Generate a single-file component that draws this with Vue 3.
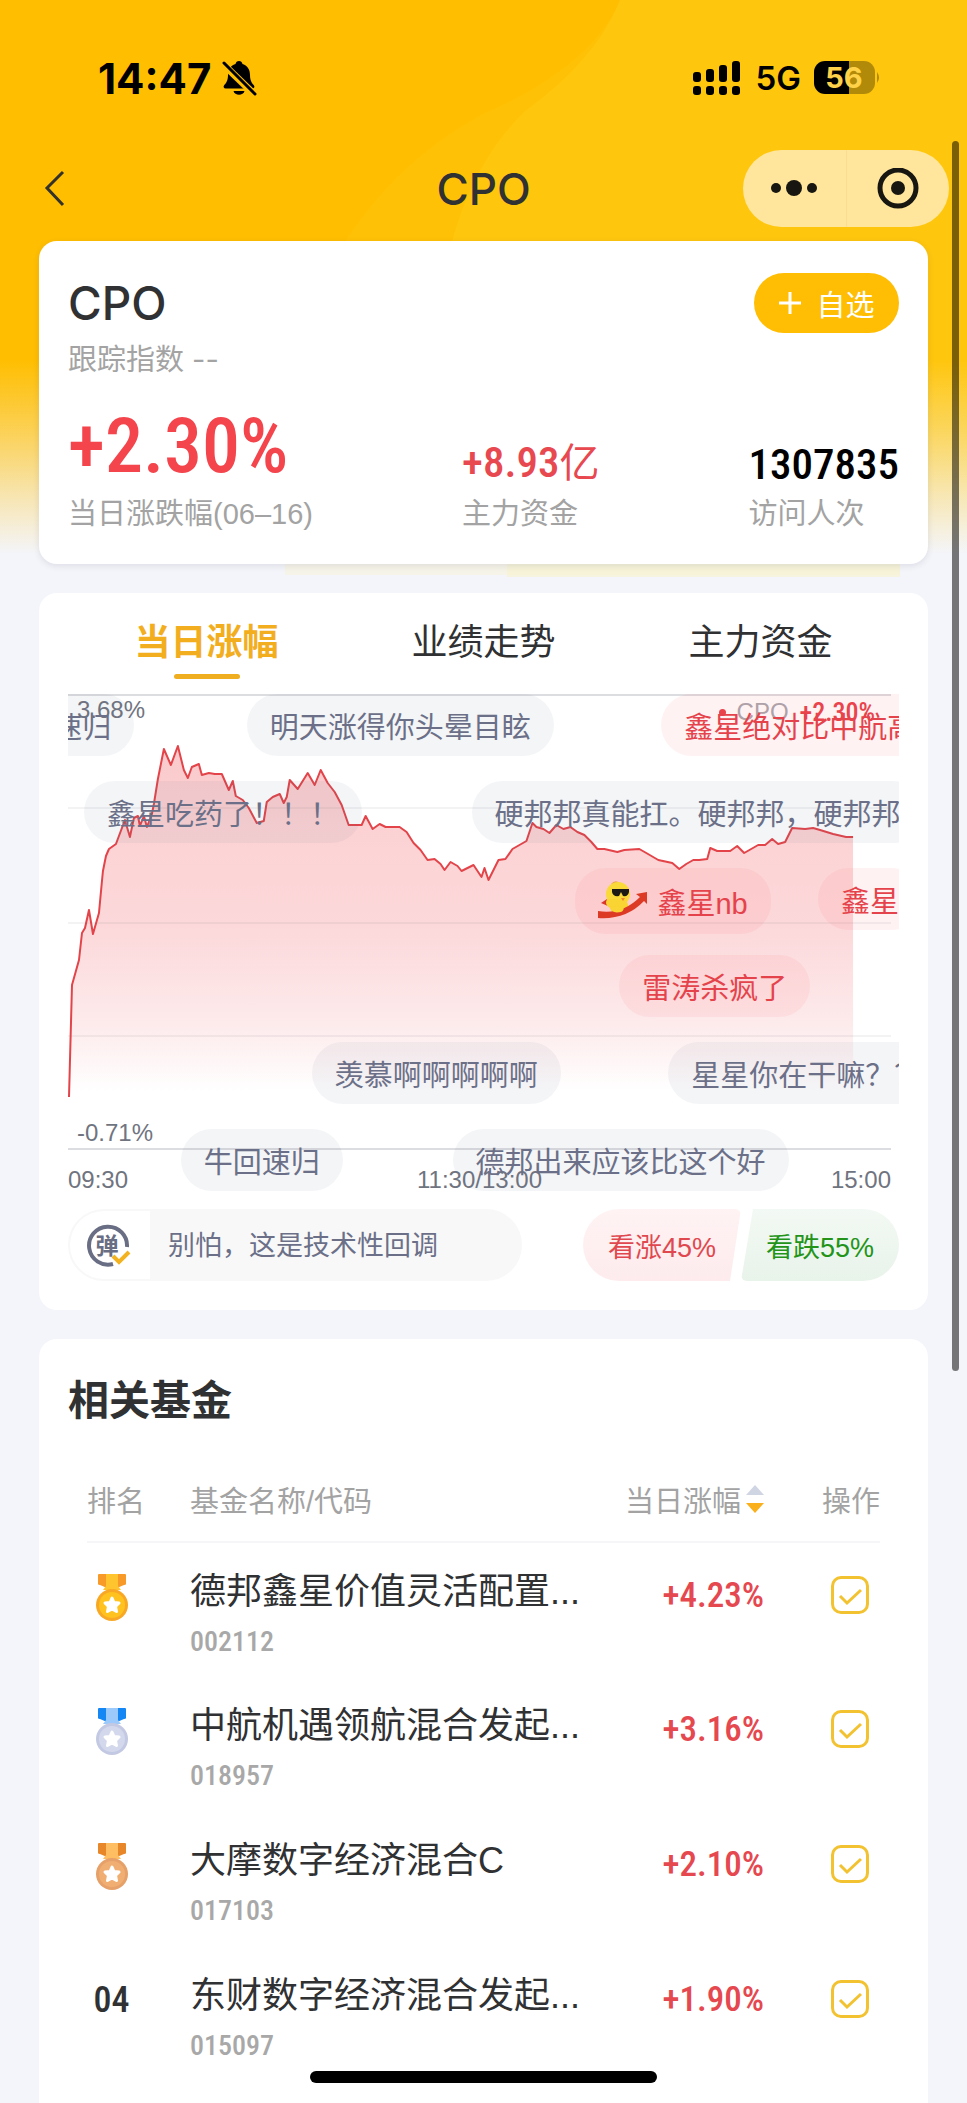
<script setup>
import { ref } from 'vue'

const tabs = ['当日涨幅', '业绩走势', '主力资金']
const activeTab = ref(0)

// The plot is drawn in the coordinates of its viewBox: x 67-899, y 693-1193
const plot = { left: 67, width: 832 }
const trend = [
  [68, 1096], [71, 984], [78, 959], [81, 932], [84, 927], [88, 909], [92, 933], [98, 912], [101, 880],
  [102, 870], [105, 855], [108, 848], [115, 843], [124, 819], [129, 836], [133, 817], [137, 815],
  [139, 825], [143, 815], [146, 826], [151, 813], [153, 803], [157, 778], [163, 748], [170, 764],
  [177, 745], [183, 769], [187, 777], [191, 766], [198, 763], [201, 774], [208, 772], [214, 773],
  [221, 773], [228, 789], [232, 780], [235, 795], [242, 799], [248, 807], [256, 822], [263, 820],
  [266, 801], [272, 796], [279, 793], [283, 802], [286, 796], [289, 779], [297, 788], [307, 772],
  [314, 784], [320, 769], [327, 782], [334, 791], [341, 804], [348, 824], [361, 824], [365, 815],
  [372, 828], [379, 823], [385, 826], [399, 826], [406, 831], [413, 842], [420, 849], [427, 859],
  [434, 858], [440, 863], [444, 869], [450, 861], [457, 865], [461, 870], [473, 864], [481, 876],
  [484, 867], [488, 879], [498, 859], [505, 858], [512, 848], [526, 840], [532, 822], [536, 826],
  [543, 828], [549, 832], [556, 824], [563, 828], [570, 826], [577, 831], [584, 834], [591, 841],
  [597, 848], [604, 848], [617, 851], [624, 849], [639, 848], [646, 852], [658, 859], [672, 862],
  [679, 868], [686, 863], [693, 859], [699, 859], [707, 858], [710, 847], [717, 850], [730, 850],
  [737, 845], [744, 852], [758, 844], [765, 844], [772, 838], [778, 843], [785, 841], [792, 827],
  [805, 828], [813, 827], [820, 829], [833, 833], [846, 836], [853, 836]
]
const line = trend.map((p) => p.join(',')).join(' ')
const area = `68,1096 ${line} 853,1096`
const gridLines = [807, 922, 1035]

const bullets = [
  { row: 0, x: -29, text: '牛回速归' },
  { row: 0, x: 246, text: '明天涨得你头晕目眩' },
  { row: 0, x: 661, text: '鑫星绝对比中航高', up: true },
  { row: 1, x: 83, text: '鑫星吃药了！！！' },
  { row: 1, x: 471, text: '硬邦邦真能扛。硬邦邦，硬邦邦' },
  { row: 2, x: 575, text: '鑫星nb', up: true, chick: true },
  { row: 2, x: 818, text: '鑫星', up: true },
  { row: 3, x: 619, text: '雷涛杀疯了', up: true },
  { row: 4, x: 311, text: '羡慕啊啊啊啊啊' },
  { row: 4, x: 668, text: '星星你在干嘛？？' },
  { row: 5, x: 180, text: '牛回速归' },
  { row: 5, x: 452, text: '德邦出来应该比这个好' }
]
const place = (b) => ({
  left: ((b.x - plot.left) / plot.width) * 100 + '%',
  top: b.row * 87 + 'px'
})

const medals = [
  { side: '#f79a28', mid: '#ffc42e', rim: '#f9a825', disc: '#ffc21f' },
  { side: '#1487f5', mid: '#9cc9fb', rim: '#c3c9e2', disc: '#d3d8ec' },
  { side: '#e8872a', mid: '#ffbe62', rim: '#e6a069', disc: '#f0ae72' }
]
const funds = ref([
  { name: '德邦鑫星价值灵活配置...', code: '002112', change: '+4.23%', picked: true },
  { name: '中航机遇领航混合发起...', code: '018957', change: '+3.16%', picked: true },
  { name: '大摩数字经济混合C', code: '017103', change: '+2.10%', picked: true },
  { name: '东财数字经济混合发起...', code: '015097', change: '+1.90%', picked: true }
])
</script>

<template>
  <div class="page">
    <svg class="backdrop" viewBox="0 0 967 580" preserveAspectRatio="none" aria-hidden="true">
      <defs>
        <linearGradient id="fade" x1="0" y1="0" x2="0" y2="1">
          <stop offset="0.62" stop-color="#f4f5fa" stop-opacity="0" />
          <stop offset="0.74" stop-color="#f4f5fa" stop-opacity="0.33" />
          <stop offset="0.86" stop-color="#f4f5fa" stop-opacity="0.72" />
          <stop offset="0.955" stop-color="#f4f5fa" stop-opacity="1" />
        </linearGradient>
      </defs>
      <rect width="967" height="580" fill="#ffbe00" />
      <path d="M620 0C600 50 540 90 487 112C430 142 380 185 340 250L300 580H967V0Z" fill="#ffc106" />
      <path d="M620 0C600 50 560 85 524 112C485 150 462 200 450 250L420 580H967V0Z" fill="#ffc60e" />
      <rect width="967" height="580" fill="url(#fade)" />
      <path d="M285 563H900V575H285Z" fill="#f6f4dc" opacity="0.6" />
      <path d="M507 563H900V577H507Z" fill="#f6f2d2" opacity="0.7" />
    </svg>

    <header class="top">
      <div class="status">
        <span class="clock">14:47</span>
        <svg class="bell" width="36" height="36" viewBox="0 0 36 36" aria-hidden="true">
          <path d="M18 1c2 0 3 1 3.500 3C27 6 29 10 29 15c0 6 2 8 4 10.500c1 1.500 0 3-1.500 3H4.500C3 28.500 2 27 3 25.500C5 23 7 21 7 15C7 10 9 6 14.500 4C15 2 16 1 18 1Z" />
          <path d="M12.500 31h11c-1 5-10 5-11 0Z" />
          <path d="M2 4L33 34" stroke="#ffbe00" stroke-width="7" />
          <path d="M3 3L34 34" stroke="#000" stroke-width="3" stroke-linecap="round" />
        </svg>
        <span class="spacer"></span>
        <svg class="signal" width="48" height="34" viewBox="0 0 48 34" aria-hidden="true">
          <rect x="0" y="11" width="8" height="10" rx="3" /><rect x="13" y="8" width="8" height="13" rx="3" />
          <rect x="26" y="4" width="8" height="17" rx="3" /><rect x="39" y="0" width="8" height="21" rx="3" />
          <rect x="0" y="25" width="8" height="9" rx="3" /><rect x="13" y="25" width="8" height="9" rx="3" />
          <rect x="26" y="25" width="8" height="9" rx="3" /><rect x="39" y="25" width="8" height="9" rx="3" />
        </svg>
        <span class="network">5G</span>
        <svg class="battery" width="67" height="34" viewBox="0 0 67 34" aria-hidden="true">
          <path d="M35 0H50a11 11 0 0 1 11 11V22a11 11 0 0 1-11 11H35Z" fill="#000" opacity="0.3" />
          <path d="M35 0H11A11 11 0 0 0 0 11V22A11 11 0 0 0 11 33H35Z" fill="#000" />
          <path d="M63 11q4 5.500 0 11Z" fill="#000" opacity="0.3" />
          <text x="30" y="27" text-anchor="middle" class="charge">56</text>
        </svg>
      </div>

      <nav class="nav">
        <button class="back" type="button" aria-label="返回">
          <svg width="22" height="38" viewBox="0 0 22 38"><path d="M19 2L3 18L19 35" fill="none" stroke="#33322a" stroke-width="3" /></svg>
        </button>
        <h1>CPO</h1>
        <div class="capsule">
          <button type="button" aria-label="更多">
            <svg width="46" height="20" viewBox="0 0 46 20"><circle cx="5" cy="9" r="5" /><circle cx="23" cy="9" r="8" /><circle cx="41" cy="9" r="5" /></svg>
          </button>
          <button type="button" aria-label="关闭">
            <svg width="42" height="42" viewBox="0 0 42 42"><circle cx="21" cy="20" r="18" fill="none" stroke="#171610" stroke-width="5" /><circle cx="21" cy="20" r="7" /></svg>
          </button>
        </div>
      </nav>
    </header>

    <main>
      <section class="card summary">
        <div class="title-row">
          <h2>CPO</h2>
          <button class="add" type="button">
            <svg width="24" height="24" viewBox="0 0 24 24" aria-hidden="true"><path d="M12 1V23M1 12H23" stroke="#fff" stroke-width="3" /></svg>
            自选
          </button>
        </div>
        <p class="label tracking">跟踪指数 <span>--</span></p>
        <div class="stats">
          <div><strong class="big">+2.30%</strong><span class="label">当日涨跌幅(06–16)</span></div>
          <div><strong class="mid up">+8.93<b>亿</b></strong><span class="label">主力资金</span></div>
          <div><strong class="mid">1307835</strong><span class="label">访问人次</span></div>
        </div>
      </section>

      <section class="card trend">
        <div class="tabs" role="tablist">
          <button
            v-for="(tab, i) in tabs" :key="tab" type="button" role="tab"
            :aria-selected="activeTab === i" :class="{ active: activeTab === i }" @click="activeTab = i"
          >{{ tab }}</button>
        </div>

        <div class="chart">
          <svg class="plot" viewBox="67 693 832 500" preserveAspectRatio="none" aria-hidden="true">
            <defs>
              <linearGradient id="rise" gradientUnits="userSpaceOnUse" x1="0" y1="745" x2="0" y2="1090">
                <stop offset="0" stop-color="#fac9cb" />
                <stop offset="0.3" stop-color="#fcd4d5" />
                <stop offset="0.52" stop-color="#fcd8da" />
                <stop offset="0.8" stop-color="#fdeaeb" />
                <stop offset="1" stop-color="#fff" />
              </linearGradient>
            </defs>
            <polygon :points="area" fill="url(#rise)" />
            <path v-for="y in gridLines" :key="y" :d="`M67 ${y}H891`" stroke="#64646e" stroke-opacity="0.08" stroke-width="2" />
            <path d="M67 694H891M67 1148H891" stroke="#dcdde0" stroke-width="2" />
            <polyline :points="line" fill="none" stroke="#e2444a" stroke-width="2" stroke-linejoin="round" />
          </svg>
          <span class="tick high">3.68%</span>
          <span class="tick low">-0.71%</span>
          <div class="legend"><i></i><span>CPO</span><b>+2.30%</b></div>
          <div class="times"><span>09:30</span><span>11:30/13:00</span><span>15:00</span></div>
          <div
            v-for="(b, i) in bullets" :key="i" class="bullet"
            :class="{ up: b.up, chick: b.chick }" :style="place(b)"
          >
            <svg v-if="b.chick" width="50" height="42" viewBox="0 0 50 42" aria-hidden="true">
              <path d="M9 19L3 23L10 26Z" fill="#d9362c" />
              <path d="M13 4Q17-1 22 3L18 7Z" fill="#eaa54c" />
              <circle cx="20" cy="14" r="12" fill="#f9da38" />
              <path d="M9 19Q6 25 12 28Q14 36 25 34Q34 30 28 20Z" fill="#f9d432" />
              <path d="M0 31Q24 35 42 17L38 14L49 12L49 24L46 21Q28 40 0 38Z" fill="#dd3a26" />
              <path d="M12 27Q13 34 23 32Q27 30 25 26Z" fill="#f9d432" />
              <path d="M14 9H31V12Q30 17 25 16L23 12L21 16Q15 17 14 12Z" fill="#1c1a14" />
              <path d="M23 18L27 18L25 21Z" fill="#f08a2a" />
            </svg>
            <span>{{ b.text }}</span>
          </div>
        </div>

        <div class="actions">
          <div class="comment">
            <button type="button" aria-label="弹幕开关">
              <svg width="46" height="46" viewBox="0 0 46 46" aria-hidden="true">
                <path d="M42 25A19 19 0 1 0 28 42" fill="none" stroke="#696e84" stroke-width="4" />
                <text x="22" y="32" text-anchor="middle" class="dan">弹</text>
                <path d="M28 34L34 40L44 30" fill="none" stroke="#f3b220" stroke-width="4" />
              </svg>
            </button>
            <input type="text" aria-label="发送弹幕" placeholder="别怕，这是技术性回调" />
          </div>
          <div class="votes">
            <button class="bull" type="button">看涨45%</button>
            <button class="bear" type="button">看跌55%</button>
          </div>
        </div>
      </section>

      <section class="card funds">
        <h2>相关基金</h2>
        <table>
          <thead>
            <tr>
              <th class="rank">排名</th>
              <th class="name">基金名称/代码</th>
              <th class="change">
                <button type="button">当日涨幅<svg width="18" height="30" viewBox="0 0 18 30" aria-hidden="true"><path d="M9 1L18 11H0Z" fill="#d0d5e4" /><path d="M9 29L0 19H18Z" fill="#f9b01c" /></svg></button>
              </th>
              <th class="pick">操作</th>
            </tr>
          </thead>
          <tbody>
            <tr v-for="(fund, i) in funds" :key="fund.code">
              <td class="rank">
                <svg v-if="medals[i]" width="34" height="50" viewBox="0 0 34 50" role="img" :aria-label="`第${i + 1}名`">
                  <path d="M3 2Q3 1 4 1H30Q31 1 31 2V11Q31 12 29 12L22 15H12L5 12Q3 12 3 11Z" :fill="medals[i].side" />
                  <path d="M11 1H23V13L26 17H8L11 13Z" :fill="medals[i].mid" />
                  <circle cx="17" cy="32" r="16" :fill="medals[i].rim" />
                  <circle cx="17" cy="32" r="13" :fill="medals[i].disc" />
                  <path d="M17 25L19 29.500L24 30L20.500 33.500L21.500 38.500L17 36L12.500 38.500L13.500 33.500L10 30L15 29.500Z" fill="#fff" stroke="#fff" stroke-width="3" stroke-linejoin="round" />
                </svg>
                <span v-else>{{ String(i + 1).padStart(2, '0') }}</span>
              </td>
              <td class="name"><a href="#">{{ fund.name }}</a><small>{{ fund.code }}</small></td>
              <td class="change">{{ fund.change }}</td>
              <td class="pick">
                <label>
                  <input v-model="fund.picked" type="checkbox" :aria-label="fund.name" />
                  <svg v-if="fund.picked" width="38" height="38" viewBox="0 0 38 38" aria-hidden="true"><path d="M9 20L16 27L30 14" fill="none" stroke="#f2c230" stroke-width="3" /></svg>
                </label>
              </td>
            </tr>
          </tbody>
        </table>
      </section>
    </main>

    <div class="scrollbar"></div>
    <div class="home"></div>
  </div>
</template>

<style>
body {
  background: #f4f5fa;
}
</style>

<style scoped>
.page {
  --sans: "Liberation Sans", "Noto Sans CJK SC", sans-serif;
  --narrow: "Liberation Sans Narrow", "Arial Narrow", "Roboto Condensed", "Roboto", "Noto Sans CJK SC", sans-serif;
  position: relative;
  display: flex;
  flex-direction: column;
  min-height: 100vh;
  overflow: hidden;
  background: #f4f5fa;
  font-family: var(--sans);
  font-size: 29px;
  color: #303133;
}
.page * {
  box-sizing: border-box;
}
h1, h2, p {
  margin: 0;
}
button {
  padding: 0;
  border: 0;
  background: none;
  color: inherit;
  font: inherit;
  cursor: pointer;
}
svg {
  display: block;
  flex: none;
}
.backdrop {
  position: absolute;
  top: 0;
  left: 0;
  width: 100%;
  height: 580px;
}
.top, main {
  position: relative;
}
.status {
  display: flex;
  align-items: center;
  height: 150px;
  padding: 58px 86px 52px 98px;
  color: #000;
  font-family: "Inter", sans-serif;
}
.clock {
  font-size: 42px;
  font-weight: 700;
}
.bell {
  margin-left: 10px;
}
.spacer {
  flex: 1;
}
.network {
  margin: 0 13px 0 15px;
  font-size: 33px;
  font-weight: 600;
}
.charge {
  fill: #ffd24a;
  font-size: 29px;
  font-weight: 700;
}
.nav {
  display: grid;
  grid-template-columns: 1fr auto 1fr;
  align-items: center;
  height: 77px;
  padding: 0 18px;
}
.back {
  justify-self: start;
  padding: 0 26px;
}
.nav h1 {
  font-family: "Inter", sans-serif;
  font-size: 44px;
  font-weight: 500;
}
.capsule {
  justify-self: end;
  display: flex;
  width: 206px;
  height: 77px;
  border-radius: 39px;
  background: #ffe69c;
}
.capsule button {
  display: flex;
  flex: 1;
  align-items: center;
  justify-content: center;
  fill: #171610;
}
.capsule button + button {
  border-left: 1px solid #f9de92;
}
main {
  display: flex;
  flex: 1;
  flex-direction: column;
  gap: 29px;
  padding: 14px 39px 0;
}
.card {
  border-radius: 18px;
  background: #fff;
}
.summary {
  padding: 32px 29px 30px;
  box-shadow: 0 2px 6px rgba(60, 60, 90, 0.12);
}
.title-row {
  display: flex;
  align-items: center;
  justify-content: space-between;
  height: 60px;
}
.title-row h2 {
  font-family: "Inter", sans-serif;
  font-size: 46px;
  font-weight: 500;
}
.add {
  display: flex;
  align-items: center;
  justify-content: center;
  gap: 14px;
  width: 145px;
  height: 60px;
  border-radius: 30px;
  background: #ffbd04;
  color: #fff;
}
.label {
  color: #a3a3a3;
  line-height: 40px;
}
.tracking {
  margin-top: 7px;
}
.tracking span {
  font-family: "Inter", sans-serif;
}
.stats {
  display: flex;
  align-items: flex-end;
  justify-content: space-between;
  margin-top: 28px;
}
.stats div {
  display: flex;
  flex-direction: column;
}
.stats strong {
  font-family: var(--narrow);
  font-weight: 500;
}
.big {
  margin-bottom: 10px;
  color: #f4444c;
  font-size: 76px;
  line-height: 76px;
}
.mid {
  margin-bottom: 10px;
  color: #000;
  font-size: 43px;
  line-height: 40px;
}
.mid b {
  font-size: 40px;
  font-weight: 400;
}
.mid.up {
  color: #e8484f;
}
.trend {
  padding: 0 29px 29px;
}
.tabs {
  display: flex;
  height: 101px;
}
.tabs button {
  position: relative;
  flex: 1;
  padding: 26px 0 27px;
  font-size: 36px;
  line-height: 48px;
}
.tabs .active {
  color: #f2ae1f;
  font-weight: 700;
}
.tabs .active::after {
  content: "";
  position: absolute;
  bottom: 15px;
  left: 50%;
  width: 66px;
  height: 5px;
  margin-left: -33px;
  border-radius: 3px;
  background: #efae20;
}
.chart {
  position: relative;
  height: 501px;
  overflow: hidden;
}
.plot {
  width: 100%;
  height: 500px;
}
.tick, .times {
  color: #70747f;
  font-size: 24px;
  line-height: 30px;
}
.tick {
  position: absolute;
  left: 9px;
}
.high {
  top: 1px;
}
.low {
  top: 424px;
}
.legend {
  position: absolute;
  top: 3px;
  right: 24px;
  display: flex;
  align-items: center;
  gap: 11px;
  color: #a8a8ae;
  font-size: 24px;
  line-height: 30px;
}
.legend i {
  width: 7px;
  height: 7px;
  border-radius: 50%;
  background: #e8434c;
}
.legend b {
  color: #e8434c;
  font-family: var(--narrow);
  font-size: 26px;
  font-weight: 500;
}
.times {
  position: absolute;
  right: 8px;
  bottom: 0;
  left: 0;
  display: flex;
  justify-content: space-between;
}
.bullet {
  position: absolute;
  display: flex;
  align-items: center;
  gap: 9px;
  height: 62px;
  padding: 0 23px;
  border-radius: 31px;
  background: rgba(100, 115, 145, 0.07);
  color: #6b7088;
  white-space: nowrap;
}
.bullet.up {
  background: rgba(255, 70, 85, 0.07);
  color: #e5434b;
}
.bullet.chick {
  height: 66px;
}
.actions {
  display: flex;
  justify-content: space-between;
  margin-top: 14px;
  height: 72px;
  font-size: 27px;
}
.comment {
  display: flex;
  width: 454px;
  overflow: hidden;
  border: 2px solid #f8f8f9;
  border-radius: 36px;
  background: #f8f8f9;
}
.comment button {
  width: 80px;
  padding-left: 15px;
  background: #fff;
}
.dan {
  fill: #696e84;
  font-size: 23px;
  font-weight: 700;
}
.comment input {
  flex: 1;
  min-width: 0;
  padding: 2px 0 0 18px;
  border: 0;
  outline: 0;
  background: none;
  color: #6b7088;
  font: inherit;
}
.comment input::placeholder {
  color: #6b7088;
  opacity: 1;
}
.votes {
  display: flex;
}
.votes button {
  width: 158px;
}
.bull {
  border-radius: 36px 6px 6px 36px;
  background: linear-gradient(#fff3f4, #fdebed);
  color: #e0484f;
  clip-path: polygon(0 0, 100% 0, calc(100% - 11px) 100%, 0 100%);
}
.bear {
  border-radius: 6px 36px 36px 6px;
  background: linear-gradient(#f3f9f4, #e8f3ea);
  color: #239419;
  clip-path: polygon(12px 0, 100% 0, 100% 100%, 0 100%);
}
.funds {
  flex: 1;
  padding: 34px 48px 0;
  border-radius: 18px 18px 0 0;
}
.funds h2 {
  margin: 0 -19px;
  font-size: 41px;
  font-weight: 700;
  line-height: 56px;
}
table {
  width: 100%;
  margin-top: 28px;
  border-collapse: collapse;
  table-layout: fixed;
}
th {
  height: 85px;
  padding: 0;
  border-bottom: 2px solid #f6f6f8;
  color: #a3a3a3;
  font-weight: 400;
  text-align: left;
}
th.rank {
  width: 103px;
}
th.change {
  width: 160px;
}
th.pick {
  width: 116px;
}
th button {
  display: flex;
  align-items: center;
  justify-content: flex-end;
  gap: 5px;
  width: 100%;
}
td {
  height: 135px;
  padding: 25px 0 0;
  vertical-align: top;
}
td.rank {
  padding-right: 54px;
  font-family: var(--narrow);
  font-size: 36px;
  font-weight: 500;
  line-height: 56px;
  text-align: center;
}
td.rank svg {
  margin: 5px auto 0;
}
.name a {
  display: block;
  color: #303133;
  font-size: 36px;
  line-height: 48px;
  text-decoration: none;
  white-space: nowrap;
}
.name small {
  display: block;
  margin-top: 8px;
  color: #a8a8a8;
  font-family: var(--narrow);
  font-size: 28px;
  font-weight: 500;
  line-height: 36px;
}
td.change {
  color: #e5484f;
  font-family: var(--narrow);
  font-size: 35px;
  font-weight: 500;
  line-height: 56px;
  text-align: right;
}
.pick {
  padding-left: 58px;
}
td.pick {
  padding-top: 33px;
}
.pick label {
  position: relative;
  display: block;
  width: 38px;
  height: 38px;
  margin-left: 9px;
}
.pick input {
  display: block;
  width: 38px;
  height: 38px;
  margin: 0;
  appearance: none;
  border: 3px solid #f2c230;
  border-radius: 10px;
}
.pick label svg {
  position: absolute;
  top: 0;
  left: 0;
  pointer-events: none;
}
.scrollbar {
  position: absolute;
  top: 141px;
  right: 8px;
  width: 7px;
  height: 1230px;
  border-radius: 4px;
  background: rgba(0, 0, 0, 0.52);
}
.home {
  position: absolute;
  bottom: 20px;
  left: 50%;
  width: 347px;
  height: 12px;
  margin-left: -174px;
  border-radius: 6px;
  background: #000;
}
</style>
